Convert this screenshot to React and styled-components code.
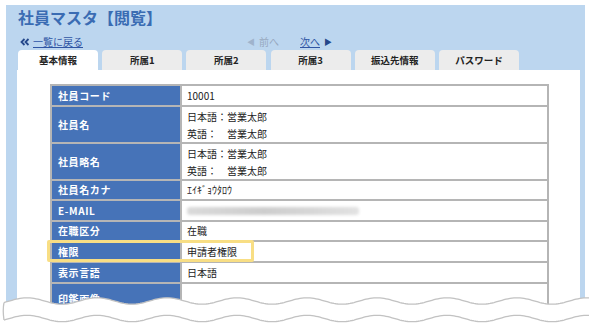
import styled, { createGlobalStyle } from "styled-components";

const GlobalStyle = createGlobalStyle`
  html, body {
    margin: 0;
    padding: 0;
    background: #ffffff;
  }
  body {
    width: 589px;
    height: 327px;
    overflow: hidden;
    font-family: "Noto Sans CJK JP", "Noto Sans", sans-serif;
  }
`;

const Page = styled.div`
  position: relative;
  width: 589px;
  height: 327px;
  padding: 5px 4px 0 6px;
  box-sizing: border-box;
  overflow: hidden;
`;

const Panel = styled.div`
  height: 100%;
  background: #bcd6ef;
  padding: 0 5px 0 11px;
  display: flex;
  flex-direction: column;
`;

const Title = styled.h1`
  margin: 0;
  height: 28px;
  line-height: 24px;
  padding-left: 1px;
  font-size: 16px;
  font-weight: 700;
  color: #3a6cb3;
`;

const NavRow = styled.div`
  height: 17px;
  display: grid;
  grid-template-columns: 230px auto;
  align-items: center;
  font-size: 10px;
`;

const BackLink = styled.a`
  display: flex;
  align-items: center;
  gap: 3px;
  padding-left: 3px;
  color: #2f55a4;
  text-decoration: none;
  span {
    text-decoration: underline;
  }
`;

const Pager = styled.div`
  display: flex;
  align-items: center;
  gap: 21px;
`;

const PagerItem = styled.span`
  display: flex;
  align-items: center;
  gap: 4px;
  color: ${(p) => (p.$off ? "#98a9bf" : "#2f55a4")};
  u {
    text-decoration: ${(p) => (p.$off ? "none" : "underline")};
  }
`;

const Arrow = styled.span`
  font-size: 8px;
  color: ${(p) => (p.$off ? "#9fb3cc" : "#24478a")};
`;

const Tabs = styled.div`
  display: flex;
  gap: 4.2px;
  height: 20px;
  padding-left: 1px;
`;

const Tab = styled.div`
  width: 80px;
  height: 20px;
  line-height: 20px;
  text-align: center;
  border-radius: 4px 4px 0 0;
  background: ${(p) => (p.$active ? "#ffffff" : "#ececec")};
  color: #222222;
  font-size: 9.5px;
  font-weight: 700;
`;

const Content = styled.div`
  flex: 1;
  background: #ffffff;
  padding: 14px 0 0 33px;
`;

const Table = styled.table`
  width: 499px;
  border-collapse: collapse;
  border: 2px solid #b5b5b5;
  td {
    border: 2px solid #b5b5b5;
    line-height: 14px;
  }
`;

const Label = styled.td`
  position: relative;
  width: 122px;
  height: ${(p) => p.$h}px;
  padding: 0 0 0 6px;
  background: #4673b8;
  color: #ffffff;
  font-size: 10px;
  font-weight: 700;
  letter-spacing: 0.6px;
  vertical-align: middle;
`;

const Value = styled.td`
  padding: 0 5px;
  font-size: 10px;
  color: #222222;
  vertical-align: middle;
`;

const Line = styled.div`
  line-height: 17px;
`;

const Blurred = styled.div`
  width: 172px;
  height: 8px;
  border-radius: 3px;
  background: linear-gradient(90deg, #dadada, #cdcdcd 45%, #d6d6d6 70%, #e2e2e2);
  filter: blur(1.6px);
`;

const Highlight = styled.div`
  position: absolute;
  left: -5px;
  top: -2px;
  width: 207px;
  height: 22px;
  box-sizing: border-box;
  border: 3px solid #f8de84;
  border-radius: 2px;
  z-index: 2;
  pointer-events: none;
`;

const Torn = styled.svg`
  position: absolute;
  left: 0;
  top: 294px;
  width: 589px;
  height: 33px;
`;

const wave = (y0, amp, from, to) => {
  const pts = [];
  for (let x = from; x <= to; x += 2) {
    const y = y0 - amp * Math.cos((2 * Math.PI * (x - 27)) / 70);
    pts.push(`${x},${y.toFixed(2)}`);
  }
  return pts;
};

const upper = wave(7, 3.2, 4, 600);
const lower = wave(24.5, 3.2, 4, 600);

const TornEdge = () => (
  <Torn viewBox="0 0 589 33">
    <path d={`M0,${upper[0].split(",")[1]} L${upper.join(" L")} L600,40 L0,40 Z`} fill="#ffffff" />
    <path d={`M${upper.join(" L")}`} fill="none" stroke="#c2c2c2" strokeWidth="1.3" />
    <path d={`M${lower.join(" L")}`} fill="none" stroke="#c2c2c2" strokeWidth="1.3" />
    <path d={`M${upper[0]} Q2.5,16 ${lower[0]}`} fill="none" stroke="#c2c2c2" strokeWidth="1.3" />
  </Torn>
);

const DoubleChevron = () => (
  <svg width="10" height="8" viewBox="0 0 10 8">
    <path d="M4.5 1 L1.5 4 L4.5 7 M8.5 1 L5.5 4 L8.5 7" fill="none" stroke="#24478a" strokeWidth="1.8" />
  </svg>
);

const tabs = ["基本情報", "所属1", "所属2", "所属3", "振込先情報", "パスワード"];

const App = () => {
  return (
    <Page>
      <GlobalStyle />
      <Panel>
        <Title>社員マスタ【閲覧】</Title>
        <NavRow>
          <BackLink>
            <DoubleChevron />
            <span>一覧に戻る</span>
          </BackLink>
          <Pager>
            <PagerItem $off>
              <Arrow $off>◀</Arrow>
              <u>前へ</u>
            </PagerItem>
            <PagerItem>
              <u>次へ</u>
              <Arrow>▶</Arrow>
            </PagerItem>
          </Pager>
        </NavRow>
        <Tabs>
          {tabs.map((t, i) => (
            <Tab key={t} $active={i === 0}>
              {t}
            </Tab>
          ))}
        </Tabs>
        <Content>
          <Table>
            <tbody>
              <tr>
                <Label $h={19}>社員コード</Label>
                <Value>10001</Value>
              </tr>
              <tr>
                <Label $h={35}>社員名</Label>
                <Value>
                  <Line>日本語：営業太郎</Line>
                  <Line>英語：　営業太郎</Line>
                </Value>
              </tr>
              <tr>
                <Label $h={35}>社員略名</Label>
                <Value>
                  <Line>日本語：営業太郎</Line>
                  <Line>英語：　営業太郎</Line>
                </Value>
              </tr>
              <tr>
                <Label $h={18}>社員名カナ</Label>
                <Value>ｴｲｷﾞｮｳﾀﾛｳ</Value>
              </tr>
              <tr>
                <Label $h={19}>E-MAIL</Label>
                <Value>
                  <Blurred />
                </Value>
              </tr>
              <tr>
                <Label $h={18}>在職区分</Label>
                <Value>在職</Value>
              </tr>
              <tr>
                <Label $h={19}>
                  権限
                  <Highlight />
                </Label>
                <Value>申請者権限</Value>
              </tr>
              <tr>
                <Label $h={19}>表示言語</Label>
                <Value>日本語</Value>
              </tr>
              <tr>
                <Label $h={30}>印鑑画像</Label>
                <Value />
              </tr>
            </tbody>
          </Table>
        </Content>
      </Panel>
      <TornEdge />
    </Page>
  );
};

export default App;
